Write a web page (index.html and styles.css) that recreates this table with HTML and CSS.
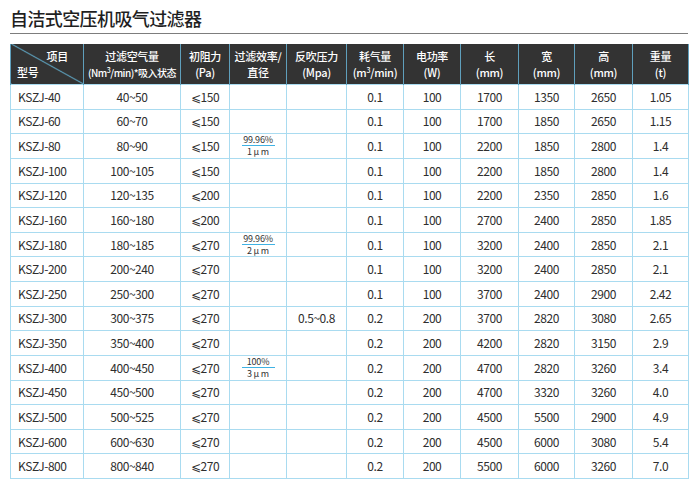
FILE: index.html
```html
<!DOCTYPE html>
<html lang="zh">
<head>
<meta charset="utf-8">
<link rel="stylesheet" href="styles.css">
</head>
<body>
<div class="page">
  <h1 class="title">自洁式空压机吸气过滤器</h1>
  <table class="spec">
    <colgroup>
      <col style="width:73px"><col style="width:97px"><col style="width:49px"><col style="width:57px"><col style="width:60px"><col style="width:57px"><col style="width:57px"><col style="width:58px"><col style="width:56px"><col style="width:58px"><col style="width:56px">
    </colgroup>
    <thead>
      <tr>
        <th class="diag"><div class="d-top">项目</div><div class="d-bot">型号</div></th>
        <th>过滤空气量<br><span class="small">(Nm<sup>3</sup>/min)*吸入状态</span></th>
        <th>初阻力<br>(Pa)</th>
        <th>过滤效率/<br>直径</th>
        <th>反吹压力<br>(Mpa)</th>
        <th>耗气量<br>(m<sup>3</sup>/min)</th>
        <th>电功率<br>(W)</th>
        <th>长<br>(mm)</th>
        <th>宽<br>(mm)</th>
        <th>高<br>(mm)</th>
        <th>重量<br>(t)</th>
      </tr>
    </thead>
    <tbody>
      <tr><td class="model">KSZJ-40</td><td>40~50</td><td>⩽150</td><td></td><td></td><td>0.1</td><td>100</td><td>1700</td><td>1350</td><td>2650</td><td>1.05</td></tr>
      <tr><td class="model">KSZJ-60</td><td>60~70</td><td>⩽150</td><td></td><td></td><td>0.1</td><td>100</td><td>1700</td><td>1850</td><td>2650</td><td>1.15</td></tr>
      <tr><td class="model">KSZJ-80</td><td>80~90</td><td>⩽150</td><td><div class="frac"><span class="num">99.96%</span><span class="den">1 μ m</span></div></td><td></td><td>0.1</td><td>100</td><td>2200</td><td>1850</td><td>2800</td><td>1.4</td></tr>
      <tr><td class="model">KSZJ-100</td><td>100~105</td><td>⩽150</td><td></td><td></td><td>0.1</td><td>100</td><td>2200</td><td>1850</td><td>2800</td><td>1.4</td></tr>
      <tr><td class="model">KSZJ-120</td><td>120~135</td><td>⩽200</td><td></td><td></td><td>0.1</td><td>100</td><td>2200</td><td>2350</td><td>2850</td><td>1.6</td></tr>
      <tr><td class="model">KSZJ-160</td><td>160~180</td><td>⩽200</td><td></td><td></td><td>0.1</td><td>100</td><td>2700</td><td>2400</td><td>2850</td><td>1.85</td></tr>
      <tr><td class="model">KSZJ-180</td><td>180~185</td><td>⩽270</td><td><div class="frac"><span class="num">99.96%</span><span class="den">2 μ m</span></div></td><td></td><td>0.1</td><td>100</td><td>3200</td><td>2400</td><td>2850</td><td>2.1</td></tr>
      <tr><td class="model">KSZJ-200</td><td>200~240</td><td>⩽270</td><td></td><td></td><td>0.1</td><td>100</td><td>3200</td><td>2400</td><td>2850</td><td>2.1</td></tr>
      <tr><td class="model">KSZJ-250</td><td>250~300</td><td>⩽270</td><td></td><td></td><td>0.1</td><td>100</td><td>3700</td><td>2400</td><td>2900</td><td>2.42</td></tr>
      <tr><td class="model">KSZJ-300</td><td>300~375</td><td>⩽270</td><td></td><td>0.5~0.8</td><td>0.2</td><td>200</td><td>3700</td><td>2820</td><td>3080</td><td>2.65</td></tr>
      <tr><td class="model">KSZJ-350</td><td>350~400</td><td>⩽270</td><td></td><td></td><td>0.2</td><td>200</td><td>4200</td><td>2820</td><td>3150</td><td>2.9</td></tr>
      <tr><td class="model">KSZJ-400</td><td>400~450</td><td>⩽270</td><td><div class="frac"><span class="num">100%</span><span class="den">3 μ m</span></div></td><td></td><td>0.2</td><td>200</td><td>4700</td><td>2820</td><td>3260</td><td>3.4</td></tr>
      <tr><td class="model">KSZJ-450</td><td>450~500</td><td>⩽270</td><td></td><td></td><td>0.2</td><td>200</td><td>4700</td><td>3320</td><td>3260</td><td>4.0</td></tr>
      <tr><td class="model">KSZJ-500</td><td>500~525</td><td>⩽270</td><td></td><td></td><td>0.2</td><td>200</td><td>4500</td><td>5500</td><td>2900</td><td>4.9</td></tr>
      <tr><td class="model">KSZJ-600</td><td>600~630</td><td>⩽270</td><td></td><td></td><td>0.2</td><td>200</td><td>4500</td><td>6000</td><td>3080</td><td>5.4</td></tr>
      <tr><td class="model">KSZJ-800</td><td>800~840</td><td>⩽270</td><td></td><td></td><td>0.2</td><td>200</td><td>5500</td><td>6000</td><td>3260</td><td>7.0</td></tr>
    </tbody>
  </table>
</div>
</body>
</html>
```

FILE: styles.css
```css
html, body {
  margin: 0;
  padding: 0;
  background: #ffffff;
}
body {
  font-family: "Noto Sans CJK SC", "DejaVu Sans", sans-serif;
  color: #2e2e2e;
}
.page {
  width: 678px;
  padding: 6px 0 0 10px;
}
.title {
  margin: 0;
  font-family: "Noto Sans CJK SC", sans-serif;
  font-weight: 500;
  font-size: 18px;
  line-height: 24px;
  color: #1f1f1f;
  letter-spacing: -0.6px;
  padding-bottom: 3px;
  border-bottom: 1.5px solid #7d7d7d;
  margin-bottom: 10px;
}
.spec {
  border-collapse: collapse;
  table-layout: fixed;
  width: 678px;
}
.spec th {
  background: #333333;
  color: #ffffff;
  font-family: "Noto Sans CJK SC", sans-serif;
  font-weight: 500;
  font-size: 11px;
  line-height: 16px;
  height: 40px;
  padding: 0;
  text-align: center;
  border-left: 1px solid #5f9fbc;
  border-right: 1px solid #5f9fbc;
  letter-spacing: -0.3px;
}
.spec th .small {
  font-size: 10px;
  letter-spacing: -0.5px;
}
.spec th sup {
  font-size: 7px;
  line-height: 0;
  vertical-align: 4px;
}
.spec th.diag {
  background: #333333 linear-gradient(to top right, transparent calc(50% - 1px), #5fa6c4 50%, transparent calc(50% + 1px));
  text-align: left;
}
.d-top {
  text-align: right;
  padding-right: 15px;
}
.d-bot {
  padding-left: 6px;
}
.spec td {
  height: 23.6px;
  padding: 0;
  font-size: 12px;
  line-height: 14px;
  letter-spacing: -0.45px;
  text-align: center;
  vertical-align: middle;
  border: 1px solid #a9dbf0;
}
.spec tbody tr {
  height: 24.625px;
}
.spec td.model {
  text-align: left;
  padding-left: 7px;
}
.frac {
  display: flex;
  flex-direction: column;
  align-items: center;
  font-family: "Noto Sans CJK SC", sans-serif;
  font-size: 9px;
  line-height: 10px;
  letter-spacing: -0.2px;
  color: #333;
}
.frac .num {
  border-bottom: 1.5px solid #3fb2e4;
  padding: 0;
  width: 33px;
  text-align: center;
}
.frac .den {
  padding-top: 1px;
}
```
